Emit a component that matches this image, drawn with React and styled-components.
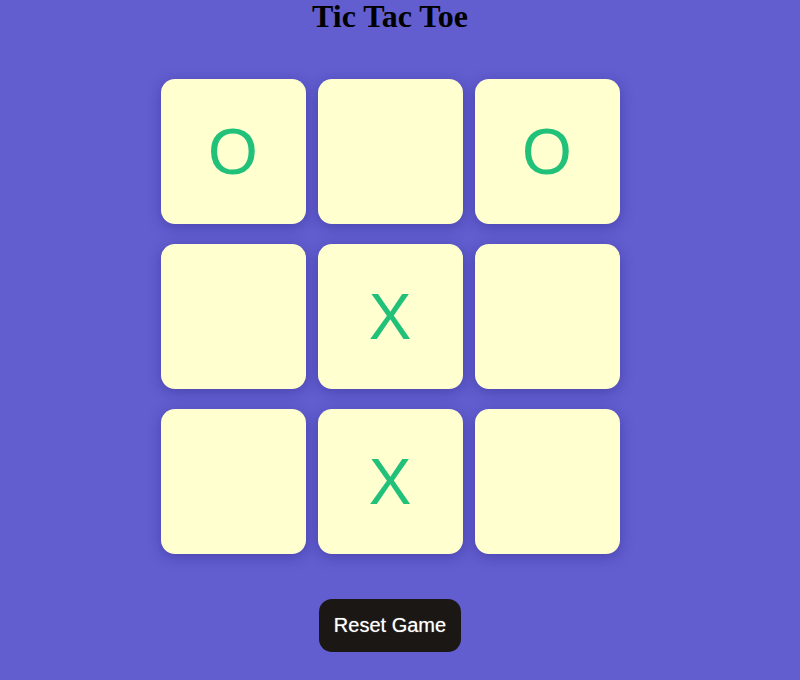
import React, { useState } from "react";
import styled, { createGlobalStyle } from "styled-components";

const GlobalStyle = createGlobalStyle`
  html, body {
    margin: 0;
    padding: 0;
    background: #625ed0;
  }
`;

const Page = styled.div`
  width: 780px;
  height: 680px;
  display: flex;
  flex-direction: column;
  align-items: center;
  background: #625ed0;
`;

const Title = styled.h1`
  margin: 1px 0 0;
  line-height: 30px;
  font-family: "Liberation Serif", "Times New Roman", serif;
  font-size: 32px;
  font-weight: bold;
  color: #000;
`;

const Board = styled.div`
  margin-top: 48px;
  display: grid;
  grid-template-columns: repeat(3, 145px);
  grid-auto-rows: 145px;
  column-gap: 12px;
  row-gap: 20px;
`;

const Cell = styled.button`
  border: none;
  padding: 0;
  border-radius: 14px;
  background: #ffffd0;
  box-shadow: 0 3px 14px rgba(30, 20, 110, 0.35);
  display: flex;
  align-items: center;
  justify-content: center;
  font-family: "Liberation Sans", Arial, sans-serif;
  font-size: 64px;
  color: #22c17a;
  cursor: pointer;
`;

const ResetButton = styled.button`
  margin-top: 45px;
  width: 142px;
  height: 53px;
  border: none;
  border-radius: 13px;
  background: #1b1715;
  color: #fff;
  font-family: "Liberation Sans", Arial, sans-serif;
  font-size: 20px;
  text-shadow: 0 0 1px rgba(255, 255, 255, 0.6);
  cursor: pointer;
`;

const initial = ["O", "", "O", "", "X", "", "", "X", ""];

export default function App() {
  const [cells, setCells] = useState(initial);

  return (
    <>
      <GlobalStyle />
      <Page>
        <Title>Tic Tac Toe</Title>
        <Board>
          {cells.map((v, i) => (
            <Cell key={i}>{v}</Cell>
          ))}
        </Board>
        <ResetButton onClick={() => setCells(Array(9).fill(""))}>Reset Game</ResetButton>
      </Page>
    </>
  );
}
